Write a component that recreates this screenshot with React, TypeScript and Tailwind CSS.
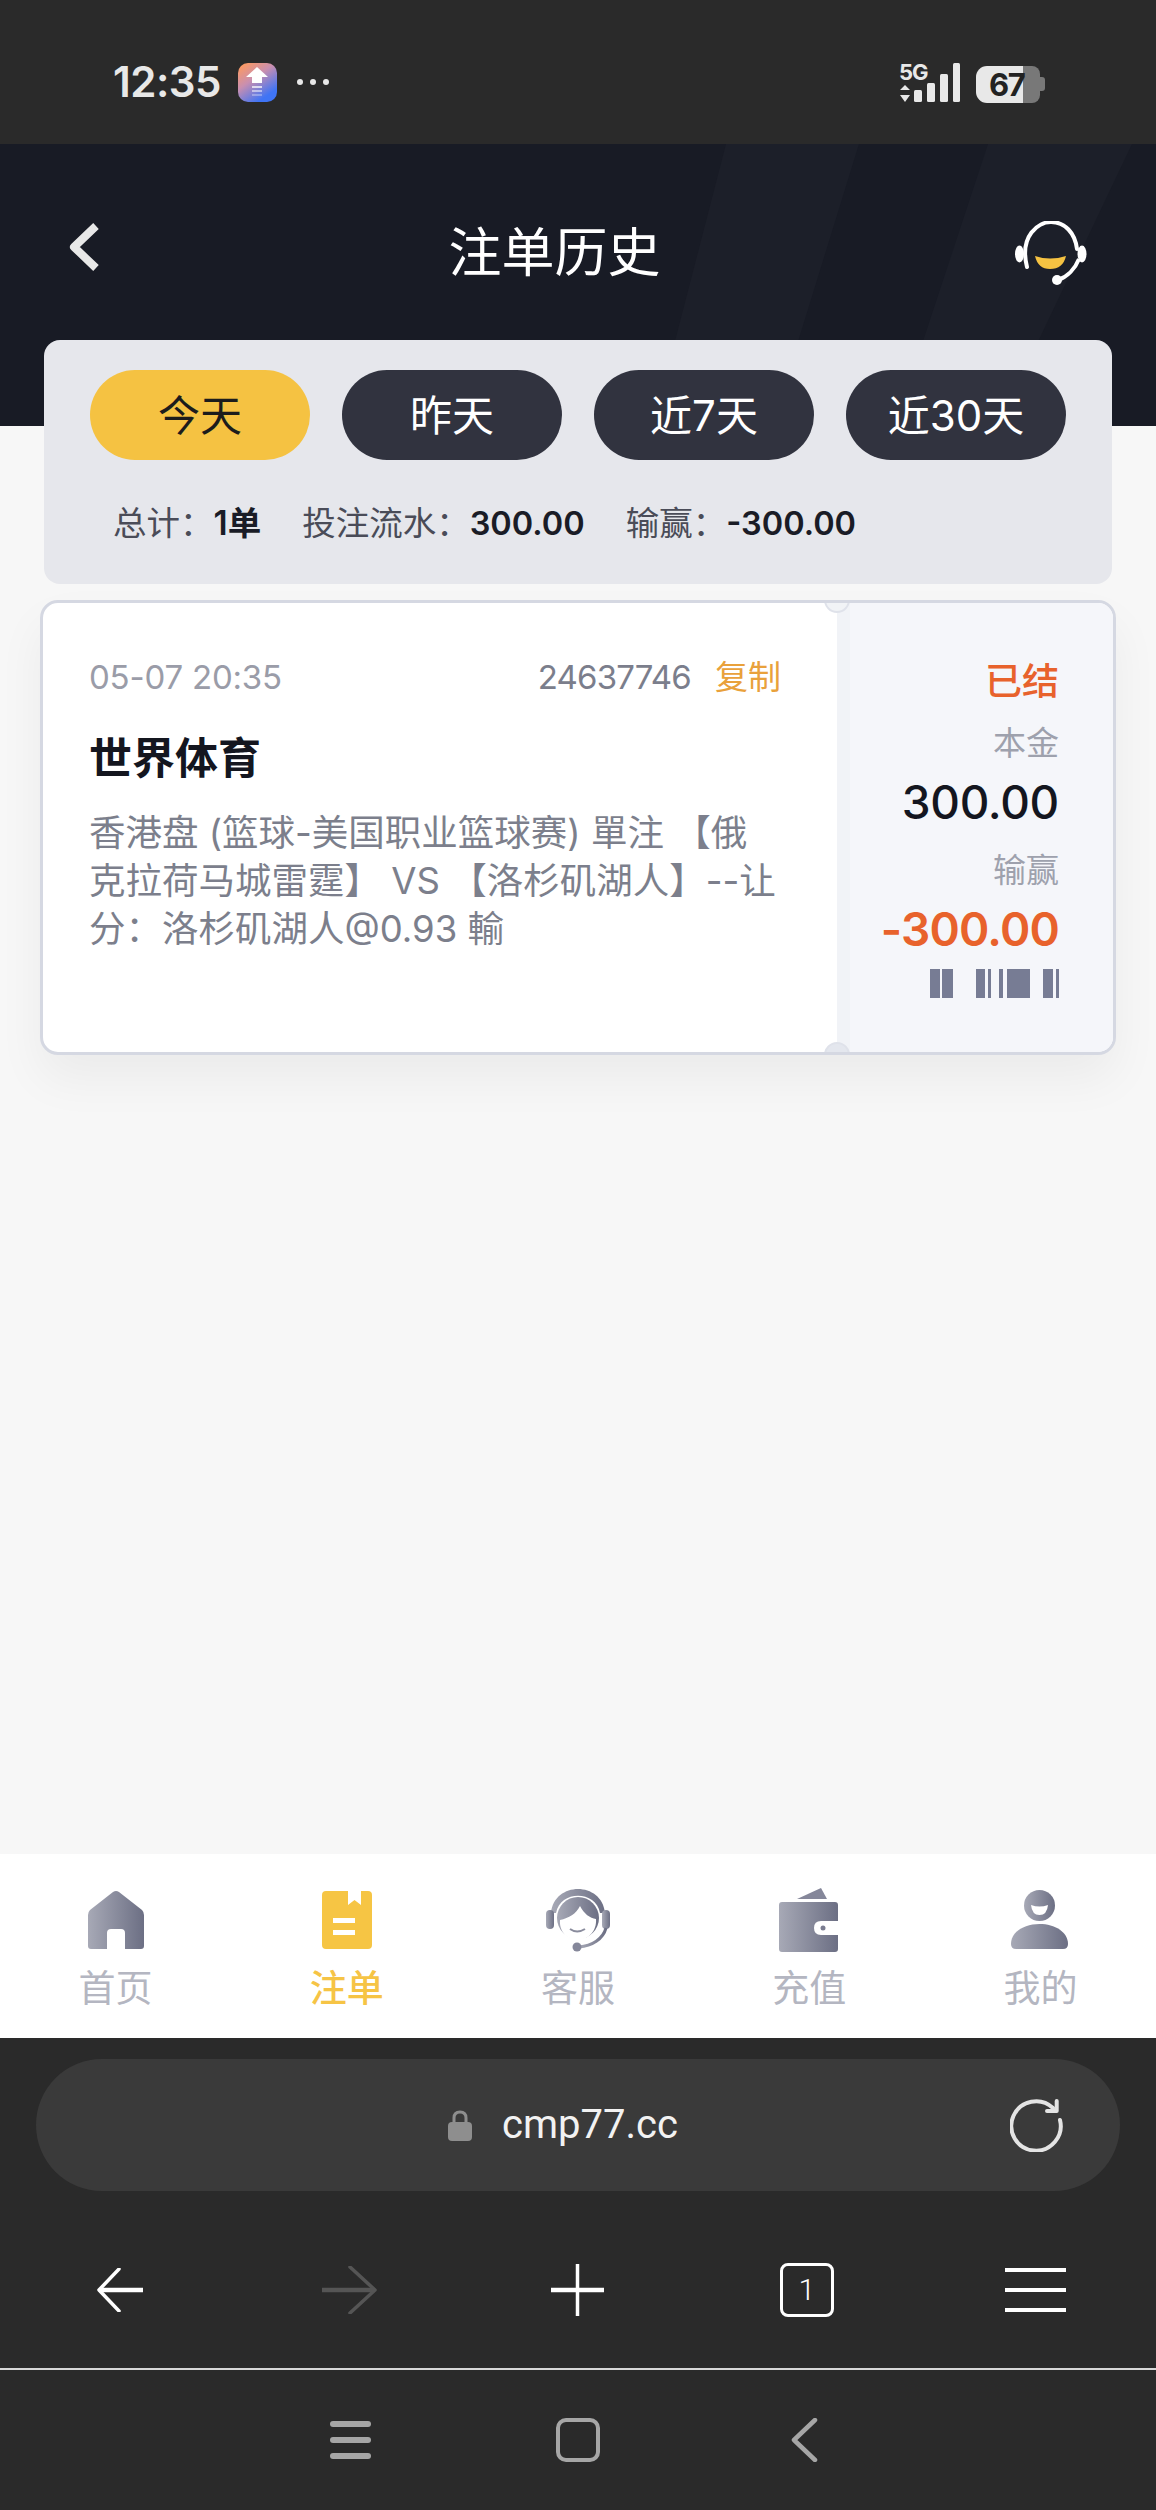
const cjk = "font-['Inter','Noto_Sans_CJK_SC',sans-serif]";

const tabs = ["今天", "昨天", "近7天", "近30天"];

function Grad({ id }: { id: string }) {
  return (
    <defs>
      <linearGradient id={id} x1="0" y1="0" x2="1" y2="0">
        <stop offset="0" stopColor="#a7a9b6" />
        <stop offset="1" stopColor="#6c6f84" />
      </linearGradient>
    </defs>
  );
}

function HomeIcon() {
  return (
    <svg width="56" height="58" viewBox="0 0 56 58">
      <Grad id="g-home" />
      <path
        fillRule="evenodd"
        fill="url(#g-home)"
        d="M25 1 L2 19 Q0 21 0 24 L0 55 Q0 58 3 58 L19 58 L19 42 Q19 38 23 38 L33 38 Q37 38 37 42 L37 58 L53 58 Q56 58 56 55 L56 24 Q56 21 54 19 L31 1 Q28 -1 25 1 Z"
      />
    </svg>
  );
}

function BookIcon() {
  return (
    <svg width="50" height="58" viewBox="0 0 50 58">
      <path
        fill="#f6c544"
        d="M4 0 L26 0 L26 14 L32.5 9 L39 14 L39 0 L46 0 Q50 0 50 4 L50 54 Q50 58 46 58 L4 58 Q0 58 0 54 L0 4 Q0 0 4 0 Z"
      />
      <rect x="11" y="27" width="22" height="5" fill="#fff" />
      <rect x="11" y="39" width="22" height="5" fill="#fff" />
    </svg>
  );
}

function AgentIcon() {
  return (
    <svg width="64" height="66" viewBox="0 0 64 66">
      <Grad id="g-agent" />
      <path d="M5 26 C8 -6 56 -6 59 26 L54 26 C50 3 14 3 10 26 Z" fill="url(#g-agent)" />
      <rect x="0" y="23" width="8" height="19" rx="4" fill="url(#g-agent)" />
      <rect x="56" y="23" width="8" height="19" rx="4" fill="url(#g-agent)" />
      <circle cx="32" cy="31" r="21" fill="url(#g-agent)" />
      <path d="M14 33 C23 31 30 27 34 19 C38 27 44 31 50 32 C51 44 42 53 32 53 C21 53 13 44 14 33 Z" fill="#fff" />
      <path d="M24 42 Q31 47 39 42" fill="none" stroke="#8a8c9d" strokeWidth="2" />
      <path d="M60 41 C57 52 46 59 33 60" fill="none" stroke="url(#g-agent)" strokeWidth="3" />
      <circle cx="31" cy="60" r="4.5" fill="#85879a" />
    </svg>
  );
}

function WalletIcon() {
  return (
    <svg width="60" height="64" viewBox="0 0 60 64">
      <Grad id="g-wallet" />
      <path d="M18 11 L42 0 L48 11 Z" fill="#85879a" />
      <path
        fill="url(#g-wallet)"
        d="M3 14 L56 14 Q59 14 59 17 L59 33 L42 33 Q35 33 35 40 Q35 47 42 47 L59 47 L59 61 Q59 64 56 64 L3 64 Q0 64 0 61 L0 17 Q0 14 3 14 Z"
      />
      <circle cx="44" cy="40" r="2.5" fill="#7b7d91" />
    </svg>
  );
}

function UserIcon() {
  return (
    <svg width="58" height="60" viewBox="0 0 58 60">
      <Grad id="g-user" />
      <circle cx="28.5" cy="15.5" r="15.5" fill="url(#g-user)" />
      <path d="M20 15 Q28.500 18 37 15 Q36 25 28.500 25 Q21 25 20 15 Z" fill="#fff" />
      <path d="M0 54 C0 42 13 34 28.500 34 C44 34 57 42 57 54 Q57 59 52 59 L5 59 Q0 59 0 54 Z" fill="url(#g-user)" />
    </svg>
  );
}

const nav = [
  { label: "首页", icon: <HomeIcon /> },
  { label: "注单", icon: <BookIcon />, active: true },
  { label: "客服", icon: <AgentIcon /> },
  { label: "充值", icon: <WalletIcon /> },
  { label: "我的", icon: <UserIcon /> },
];

function StatusLeft() {
  return (
    <div className="flex items-center">
      <span className="text-[42px] leading-[50px] font-semibold text-[#e8e8e8] font-['Inter',sans-serif] tracking-[-0.5px]">12:35</span>
      <div className="ml-[17px] w-[39px] h-[39px] rounded-[10px] bg-[linear-gradient(145deg,#ff9a5e_5%,#c98fb0_40%,#3f74f5_80%)] flex items-center justify-center">
        <svg width="24" height="30" viewBox="0 0 24 30">
          <path d="M12 0 L23 10 L17 10 L17 16 L7 16 L7 10 L1 10 Z" fill="#fff" />
          <rect x="7" y="19" width="10" height="2" fill="#fff" opacity="0.7" />
          <rect x="7" y="23" width="10" height="2" fill="#fff" opacity="0.5" />
          <rect x="7" y="27" width="10" height="2" fill="#fff" opacity="0.3" />
        </svg>
      </div>
      <div className="ml-[20px] flex gap-[7px]">
        <span className="w-[6px] h-[6px] rounded-full bg-[#e8e8e8]" />
        <span className="w-[6px] h-[6px] rounded-full bg-[#e8e8e8]" />
        <span className="w-[6px] h-[6px] rounded-full bg-[#e8e8e8]" />
      </div>
    </div>
  );
}

function StatusRight() {
  return (
    <div className="flex items-end">
      <svg width="62" height="42" viewBox="0 0 62 42" fill="#e8e8e8" className="overflow-visible">
        <text x="0" y="19" fontFamily="Inter, sans-serif" fontWeight="700" fontSize="22" letterSpacing="-1">5G</text>
        <path d="M6 24 L11 29 L1 29 Z M6 41 L11 34 L1 34 Z" />
        <rect x="15" y="29" width="8" height="12" rx="1.500" />
        <rect x="28" y="22" width="8" height="19" rx="1.500" />
        <rect x="41" y="13" width="8" height="28" rx="1.500" />
        <rect x="54" y="2" width="7" height="39" rx="1.500" />
      </svg>
      <div className="ml-[15px] w-[69px] h-[37px] relative flex">
        <div className="w-[47px] h-full rounded-l-[11px] bg-[#e8e8e8]" />
        <div className="w-[17px] h-full rounded-r-[8px] bg-[#787878]" />
        <div className="w-[5px] h-[14px] mt-[11px] rounded-r-[3px] bg-[#787878]" />
        <span className="absolute left-[13px] top-0 text-[31px] leading-[37px] font-bold text-[#222] font-['Inter',sans-serif] tracking-[-1.5px]">67</span>
      </div>
    </div>
  );
}

export default function App() {
  return (
    <div className={`w-[1156px] h-[2510px] flex flex-col bg-[#f7f7f7] ${cjk}`}>
      {/* status bar */}
      <div className="h-[144px] pt-[20px] pl-[113px] pr-[111px] bg-[#2a2a2a] flex items-center justify-between">
        <StatusLeft />
        <StatusRight />
      </div>

      {/* header */}
      <div className="relative h-[282px] shrink-0 bg-[#181b25] overflow-hidden">
        <svg className="absolute inset-0" width="1156" height="282" viewBox="0 0 1156 282">
          <polygon points="726,0 859,0 772,282 653,282" fill="#1c1f29" />
          <polygon points="988,0 1132,0 998,282 895,282" fill="#1c1f29" />
        </svg>
        <div className="relative pt-[71px] pl-[68px] pr-[69px] h-[141px] flex items-center justify-between">
          <svg className="mb-[6px]" width="32" height="50" viewBox="0 0 32 50">
            <path d="M28 4 L6 25 L28 46" fill="none" stroke="#e8e8e8" strokeWidth="8" strokeLinejoin="round" />
          </svg>
          <div className="mr-[6px] mt-[5px] text-[53px] leading-[70px] text-white">注单历史</div>
          <svg className="mt-[8px]" width="72" height="66" viewBox="0 0 72 66">
            <path d="M12 46 C4 14 24 1 36 1 C50 1 60 12 62 28" fill="none" stroke="#fff" strokeWidth="4" strokeLinecap="round" />
            <ellipse cx="4.500" cy="33" rx="4.500" ry="8.500" fill="#fff" />
            <ellipse cx="67" cy="33" rx="4.500" ry="8.500" fill="#fff" />
            <path d="M64 38 C60 48 52 56 43 59" fill="none" stroke="#fff" strokeWidth="4" />
            <circle cx="42" cy="59" r="5" fill="#fff" />
            <path d="M20 35 Q35 40 51 35 Q48 48 35 48 Q23 48 20 35 Z" fill="#f5c242" />
          </svg>
        </div>
      </div>

      {/* filter panel */}
      <div className="relative mt-[-86px] mx-[44px] h-[244px] pt-[30px] px-[46px] rounded-[16px] bg-[#e6e7ec]">
        <div className="flex justify-between">
          {tabs.map((t, i) => (
            <div
              key={t}
              className={
                i === 0
                  ? "w-[220px] h-[90px] rounded-full bg-[#f5c242] text-[#1c1c1c] text-[42px] flex items-center justify-center"
                  : "w-[220px] h-[90px] rounded-full bg-[#31333f] text-white text-[42px] flex items-center justify-center"
              }
            >
              {t}
            </div>
          ))}
        </div>
        <div className="mt-[41px] ml-[23px] flex gap-[41px] text-[33.500px] leading-[44px] text-[#4a4c58]">
          <div>总计：<span className="font-semibold text-[#1a1c26]">1单</span></div>
          <div>投注流水：<span className="text-[32.500px] font-semibold text-[#1a1c26]">300.00</span></div>
          <div>输赢：<span className="text-[32.500px] font-semibold text-[#1a1c26]">-300.00</span></div>
        </div>
      </div>

      {/* bet card */}
      <div className="relative mt-[16px] mx-[40px] h-[455px] rounded-[18px] border-[3px] border-[#d5d8e2] bg-white overflow-hidden flex shadow-[0_24px_48px_rgba(0,0,0,0.05)]">
        <div className="w-[794px] pt-[52px] pl-[46px] pr-[52px]">
          <div className="flex items-center justify-between pr-[4px] text-[33px] leading-[44px] text-[#9a9ca8]">
            <span className="tracking-[-0.2px]">05-07 20:35</span>
            <span className="flex gap-[24px]">
              <span className="text-[#7b7e8c] tracking-[-0.8px]">24637746</span>
              <span className="text-[#e9a13b]">复制</span>
            </span>
          </div>
          <div className="mt-[31px] text-[43px] leading-[56px] font-bold text-[#14161f]">世界体育</div>
          <div className="mt-[23px] text-[36.500px] leading-[48px] text-[#7c7f8c] whitespace-nowrap">
            香港盘 (篮球-美国职业篮球赛) 單注 【俄
            <br />
            克拉荷马城雷霆】 VS 【洛杉矶湖人】--让
            <br />
            分：洛杉矶湖人@0.93 輸
          </div>
        </div>
        <div className="flex-1 bg-[#f5f6fa] border-l-[13px] border-[#f1f3f7] pt-[57px] pr-[54px] flex flex-col items-end">
          <div className="text-[37px] leading-[44px] font-medium text-[#e8622c]">已结</div>
          <div className="mt-[19px] text-[33px] leading-[40px] text-[#9ea1ad]">本金</div>
          <div className="mt-[13px] text-[46px] leading-[52px] font-medium text-[#14161f] tracking-[-0.3px]">300.00</div>
          <div className="mt-[22px] text-[33px] leading-[40px] text-[#9ea1ad]">输赢</div>
          <div className="mt-[13px] text-[46px] leading-[52px] font-semibold text-[#e8622c] tracking-[-0.8px]">-300.00</div>
          <svg className="mt-[14px]" width="129" height="29" viewBox="0 0 129 29" fill="#777c94">
            <rect x="0" width="10" height="29" />
            <rect x="12" width="11" height="29" />
            <rect x="46" width="9" height="29" />
            <rect x="58" width="3" height="29" />
            <rect x="69" width="4" height="29" />
            <rect x="77" width="23" height="29" />
            <rect x="113" width="10" height="29" />
            <rect x="126" width="3" height="29" />
          </svg>
        </div>
        <div className="absolute left-[781px] top-[-16px] w-[26px] h-[26px] rounded-full bg-[#f1f3f6] border-[2px] border-[#dfe2ea]" />
        <div className="absolute left-[781px] bottom-[-16px] w-[26px] h-[26px] rounded-full bg-[#e4e7ee] border-[2px] border-[#dfe2ea]" />
      </div>

      <div className="flex-1" />

      {/* tab bar */}
      <div className="h-[184px] shrink-0 bg-white grid grid-cols-5">
        {nav.map((n) => (
          <div key={n.label} className="flex flex-col items-center">
            <div className="h-[66px] mt-[33px] flex items-center justify-center">{n.icon}</div>
            <div className={n.active ? "mt-[14px] text-[37px] leading-[44px] font-medium text-[#f6c445]" : "mt-[14px] text-[37px] leading-[44px] text-[#b4b6c1]"}>
              {n.label}
            </div>
          </div>
        ))}
      </div>

      {/* browser chrome */}
      <div className="h-[472px] shrink-0 bg-[#2a2a2a] flex flex-col">
        <div className="relative mt-[21px] mx-[36px] h-[132px] rounded-[66px] bg-[#3a3a3a] flex items-center justify-center">
          <div className="flex items-center gap-[30px] ml-[-30px]">
            <svg width="24" height="31" viewBox="0 0 24 31">
              <path d="M6 14 L6 8 Q6 2 12 2 Q18 2 18 8 L18 14" fill="none" stroke="#8e8e8e" strokeWidth="3" />
              <rect x="0" y="12" width="24" height="19" rx="4" fill="#8e8e8e" />
            </svg>
            <span className="text-[40px] leading-[56px] text-[#f2f2f2] font-['Roboto',sans-serif]">cmp77.cc</span>
          </div>
          <svg className="absolute right-[56px] top-[39px]" width="54" height="54" viewBox="0 0 54 54" fill="none" stroke="#e4e4e4" strokeWidth="4" strokeLinecap="round" strokeLinejoin="round">
            <path d="M50 22 A24.700 24.700 0 1 1 43 10" />
            <path d="M46.700 3 L46.700 13 L37 13" />
          </svg>
        </div>

        <div className="h-[177px] pt-[21px] px-[6px] shrink-0 grid grid-cols-5 items-center justify-items-center">
          <svg width="46" height="44" viewBox="0 0 46 44" fill="none" stroke="#fff">
            <path d="M22 1 L2 22 L22 43" strokeWidth="3.500" strokeLinecap="round" strokeLinejoin="round" />
            <path d="M3 22 L46 22" strokeWidth="4.500" />
          </svg>
          <svg width="55" height="48" viewBox="0 0 55 48" fill="none" stroke="#555">
            <path d="M28 1 L53 24 L28 47" strokeWidth="3.500" strokeLinecap="round" strokeLinejoin="round" />
            <path d="M0 24 L52 24" strokeWidth="4.500" />
          </svg>
          <svg width="53" height="52" viewBox="0 0 53 52" fill="none" stroke="#fff">
            <path d="M26.500 0 L26.500 52" strokeWidth="3.500" />
            <path d="M0 26 L53 26" strokeWidth="4.500" />
          </svg>
          <div className="w-[54px] h-[54px] rounded-[8px] border-[3px] border-white text-white text-[30px] font-['Roboto',sans-serif] font-light leading-none flex items-center justify-center">1</div>
          <div className="w-[61px] h-[44px] flex flex-col justify-between">
            <div className="h-[4px] bg-white" />
            <div className="h-[4px] bg-white" />
            <div className="h-[4px] bg-white" />
          </div>
        </div>

        <div className="h-[2px] shrink-0 bg-[#d8d8d8]" />

        <div className="flex-1 px-[6px] grid grid-cols-5 items-center justify-items-center">
          <div className="col-start-2 mr-[-2px] w-[41px] h-[38px] flex flex-col justify-between">
            <div className="h-[6px] rounded-full bg-[#a6a6a6]" />
            <div className="h-[6px] rounded-full bg-[#a6a6a6]" />
            <div className="h-[6px] rounded-full bg-[#a6a6a6]" />
          </div>
          <div className="w-[44px] h-[44px] rounded-[10px] border-[4px] border-[#a6a6a6]" />
          <svg className="mr-[6px]" width="28" height="44" viewBox="0 0 28 44" fill="none" stroke="#a6a6a6" strokeWidth="4.500">
            <path d="M25 2 L4 22 L25 42" strokeLinecap="round" strokeLinejoin="round" />
          </svg>
        </div>
      </div>
    </div>
  );
}
